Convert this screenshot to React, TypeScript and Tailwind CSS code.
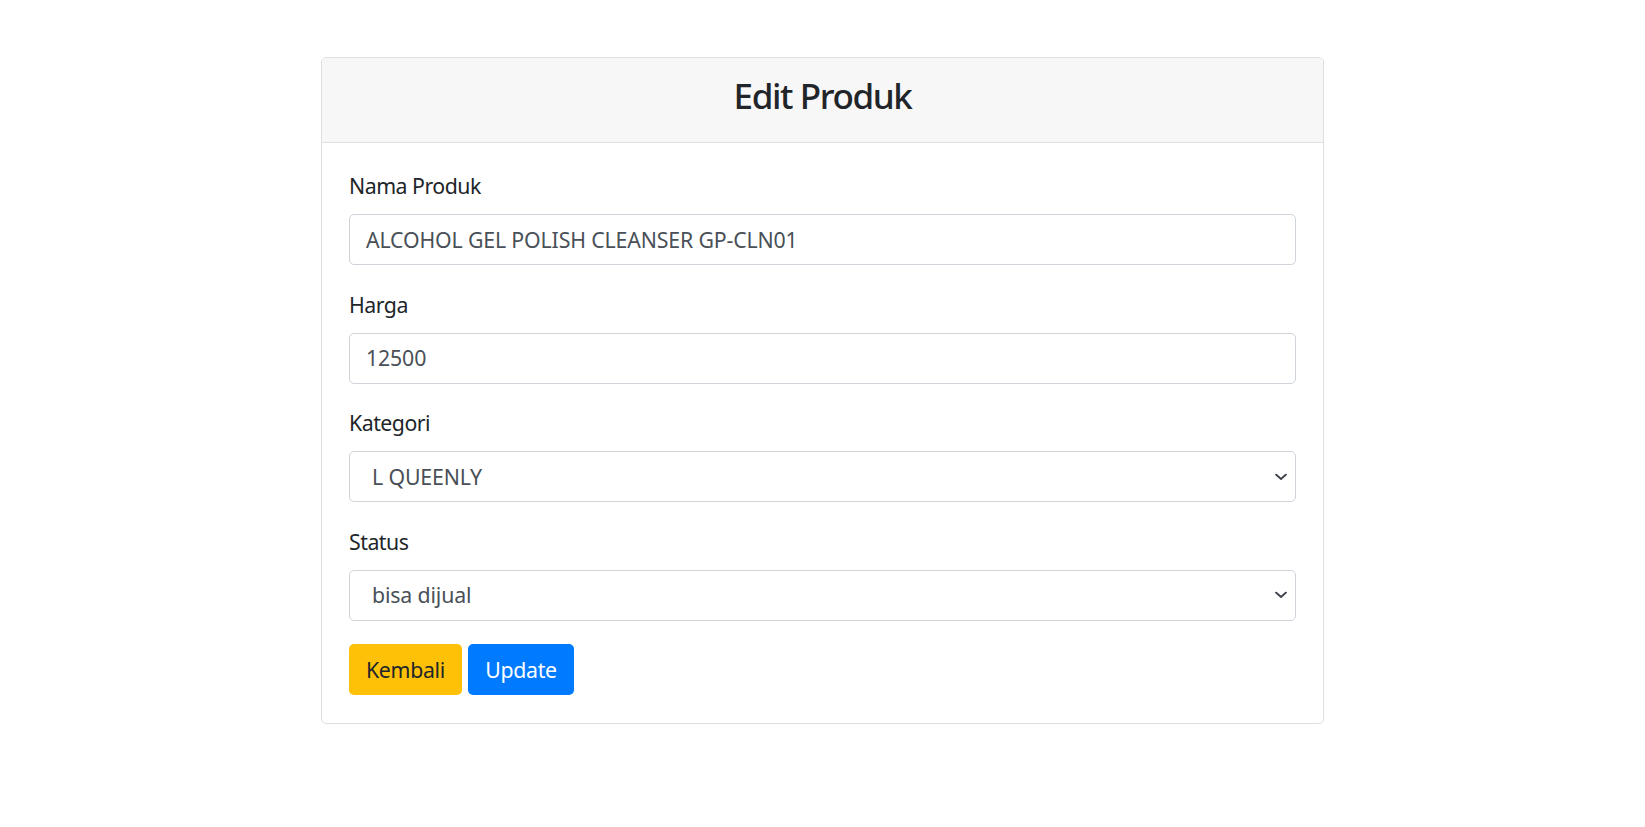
import React from 'react';

const Chevron: React.FC = () => (
  <svg
    className="pointer-events-none absolute right-[8px] top-1/2 -translate-y-1/2"
    width="12"
    height="7"
    viewBox="0 0 12 7"
    fill="none"
  >
    <path d="M1 1l5 4.5L11 1" stroke="#3d434a" strokeWidth="1.8" strokeLinecap="round" strokeLinejoin="round" />
  </svg>
);

const Field: React.FC<{ label: string; value: string; select?: boolean }> = ({ label, value, select }) => (
  <div className="mb-[23.5px]">
    <div className="mb-[12px] h-[32px] text-[21.3px] leading-[32px] tracking-[-0.5px] text-[#212529]">{label}</div>
    <div className="relative flex h-[51px] items-center rounded-[5px] border border-[#ced4da] bg-white">
      <span className={`text-[21.3px] leading-[32px] tracking-[-0.15px] text-[#495057] ${select ? 'pl-[22px]' : 'pl-[16px]'}`}>
        {value}
      </span>
      {select && <Chevron />}
    </div>
  </div>
);

export default function App() {
  return (
    <div className="min-h-screen bg-white pt-[57px] font-['Noto_Sans',sans-serif]">
      <div className="mx-auto w-[1003px] overflow-hidden rounded-[5px] border border-[#dfdfdf] bg-white">
        {/* Header */}
        <div className="flex h-[85px] justify-center border-b border-[#dfdfdf] bg-[#f7f7f7] pt-[15px]">
          <h3 className="text-[35px] font-medium leading-[45px] tracking-[-1.4px] text-[#212529]">Edit Produk</h3>
        </div>

        {/* Body */}
        <div className="px-[27px] pt-[27px] pb-[28px]">
          <Field label="Nama Produk" value="ALCOHOL GEL POLISH CLEANSER GP-CLN01" />
          <Field label="Harga" value="12500" />
          <Field label="Kategori" value="L QUEENLY" select />
          <Field label="Status" value="bisa dijual" select />

          <div className="flex gap-[6px]">
            <button className="h-[51px] w-[113px] rounded-[5px] bg-[#ffc107] text-[21.3px] tracking-[-0.3px] text-[#212529]">
              Kembali
            </button>
            <button className="h-[51px] w-[106px] rounded-[5px] bg-[#007bff] text-[21.3px] tracking-[-0.3px] text-white">
              Update
            </button>
          </div>
        </div>
      </div>
    </div>
  );
}
